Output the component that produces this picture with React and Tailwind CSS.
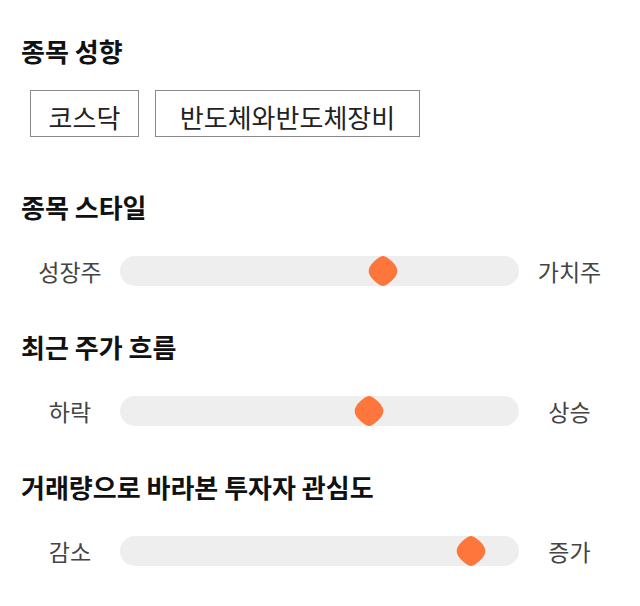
import React from "react";

const font = { fontFamily: '"Noto Sans CJK KR", "Noto Sans", sans-serif' };

function Thumb({ pct }) {
  return (
    <svg
      className="absolute top-1/2 -translate-x-1/2 -translate-y-1/2"
      style={{ left: `${pct}%` }}
      width="29"
      height="30"
      viewBox="0 0 29 30"
    >
      <path
        d="M14.5 0 C18.5 0 29 9 29 15 C29 21 18.5 30 14.5 30 C10.5 30 0 21 0 15 C0 9 10.5 0 14.5 0 Z"
        fill="#ff763c"
      />
    </svg>
  );
}

function SliderRow({ left, right, pct }) {
  return (
    <div className="flex items-center px-[20px] h-[30px]">
      <div className="w-[100px] text-center text-[23px] text-[#444444] leading-[30px]">{left}</div>
      <div className="relative w-[399px] h-[30px] rounded-full bg-[#eeeeee]">
        <Thumb pct={pct} />
      </div>
      <div className="w-[101px] text-center text-[23px] text-[#444444] leading-[30px]">{right}</div>
    </div>
  );
}

function Heading({ children }) {
  return (
    <h2 className="pl-[21px] text-[26px] font-bold leading-[30px] text-[#111111]">{children}</h2>
  );
}

export default function App() {
  return (
    <div className="w-[640px] h-[606px] bg-white pt-[36px]" style={font}>
      <Heading>종목 성향</Heading>
      <div className="flex gap-[16px] pl-[30px] mt-[24px]">
        <div className="w-[109px] h-[47px] pt-[6px] border border-[#8a8a8a] flex items-center justify-center text-[26px] text-[#222222]">
          코스닥
        </div>
        <div className="w-[265px] h-[47px] pt-[6px] border border-[#8a8a8a] flex items-center justify-center text-[26px] text-[#222222]">
          반도체와반도체장비
        </div>
      </div>

      <div className="mt-[55px]">
        <Heading>종목 스타일</Heading>
        <div className="mt-[34px]">
          <SliderRow left="성장주" right="가치주" pct={66} />
        </div>
      </div>

      <div className="mt-[46px]">
        <Heading>최근 주가 흐름</Heading>
        <div className="mt-[34px]">
          <SliderRow left="하락" right="상승" pct={62.4} />
        </div>
      </div>

      <div className="mt-[46px]">
        <Heading>거래량으로 바라본 투자자 관심도</Heading>
        <div className="mt-[34px]">
          <SliderRow left="감소" right="증가" pct={88} />
        </div>
      </div>
    </div>
  );
}
